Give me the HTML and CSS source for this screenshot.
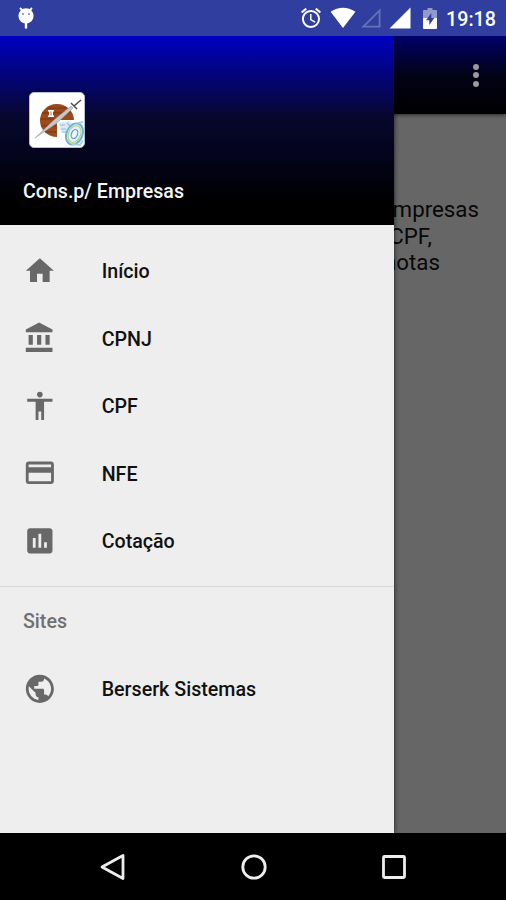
FILE: index.html
```html
<!DOCTYPE html>
<html lang="pt-BR">
<head>
<meta charset="utf-8">
<title>Cons.p/ Empresas</title>
<link rel="stylesheet" href="styles.css">
</head>
<body>
<div class="phone">
  <header class="status">
    <svg class="bug" width="18" height="24" viewBox="0 0 18 24"><path d="M3 2l3 3M15 2l-3 3" stroke="#fff" stroke-width="1.800"/><circle cx="9" cy="9.800" r="7.600" fill="#fff"/><path d="M9 16v5.500" stroke="#fff" stroke-width="2.400" stroke-linecap="round"/><circle cx="6" cy="8" r="1" fill="#7780bd"/><circle cx="12" cy="8" r="1" fill="#7780bd"/></svg>
    <svg class="alarm" width="24" height="24" viewBox="0 0 24 24" fill="#fff"><path d="M22 5.72l-4.6-3.86-1.29 1.53 4.6 3.86L22 5.72zM7.88 3.39L6.6 1.86 2 5.71l1.29 1.53 4.59-3.85zM12.5 8H11v6l4.75 2.85.75-1.23-4-2.37V8zM12 4c-4.97 0-9 4.03-9 9s4.02 9 9 9a9 9 0 0 0 0-18zm0 16c-3.87 0-7-3.13-7-7s3.13-7 7-7 7 3.13 7 7-3.13 7-7 7z"/></svg>
    <svg class="wifi" width="26" height="22" viewBox="0 0 26 22"><path d="M13 21L.6 4.8Q13-3.2 25.4 4.8z" fill="#fff"/></svg>
    <svg class="empty" width="20" height="20" viewBox="0 0 20 20"><path d="M18.6 2.4v16.2H2.4z" fill="none" stroke="#6672b8" stroke-width="1.8"/></svg>
    <svg class="signal" width="22" height="22" viewBox="0 0 22 22"><path d="M21.5.5v21H.5z" fill="#fff"/></svg>
    <svg class="battery" width="14" height="21" viewBox="0 0 14 21"><path d="M4.5 0h5v2H13a1 1 0 0 1 1 1v8H0V3a1 1 0 0 1 1-1h3.500z" fill="#929acc"/><path d="M0 10h14v10a1 1 0 0 1-1 1H1a1 1 0 0 1-1-1z" fill="#fff"/><path d="M8.300 5L3 12.300h3.300V17l5-7.100H8.300z" fill="#303f9f"/></svg>
    <span class="clock">19:18</span>
  </header>
  <main class="screen">
    <div class="toolbar"><i></i><i></i><i></i></div>
    <div class="content">
      <p class="line-a">empresas</p>
      <p class="line-b">CPF,</p>
      <p class="line-c">notas</p>
    </div>
    <aside class="drawer">
      <div class="account">
        <svg class="logo" width="56" height="56" viewBox="0 0 56 56">
          <rect x=".5" y=".5" width="55" height="55" rx="4.500" fill="#fff" stroke="#b9bdd0"/>
          <path d="M28 28V45A17 16.500 0 1 1 45 28z" fill="#9b4a1c"/>
          <path d="M13 21h28M11 27h20M12 34h15M16 40h12M18 16h20" stroke="#6d2c0d" stroke-width="1" opacity=".7"/>
          <path d="M19 18h6v1.500h-1v4h1V25h-6v-1.500h1v-4h-1z" fill="#fff"/>
          <path d="M22 19.500v4" stroke="#9b4a1c" stroke-width=".8"/>
          <path d="M6 46L25 28 42 14l2 2L28 31z" fill="#c5c9cc" stroke="#9a9fa3" stroke-width=".6"/>
          <path d="M42 11l6 6M45 14l7-6" stroke="#4b4b4d" stroke-width="1.500"/>
          <path d="M29 31l11-2 5 3-6 11-7-3z" fill="#d8ebf6"/>
          <path d="M31 33h5M32 37h5M38 31l3 3M33 40h4" stroke="#8fc0de" stroke-width="1.200"/>
          <ellipse cx="45.500" cy="42" rx="8" ry="11" transform="rotate(24 45.500 42)" fill="#e2f2f8" stroke="#6fb3cf" stroke-width="1.900"/>
          <ellipse cx="45.500" cy="42" rx="6" ry="8.700" transform="rotate(24 45.500 42)" fill="none" stroke="#b6c97b" stroke-width="1"/>
          <ellipse cx="45.500" cy="42" rx="3" ry="4.700" transform="rotate(24 45.500 42)" fill="#eff8fd" stroke="#5a9fce" stroke-width="1.200"/>
          <path d="M43 52l8 1 3-5M49 31l5-1" fill="none" stroke="#a4d0e8" stroke-width="1.800"/>
        </svg>
        <div class="name">Cons.p/ Empresas</div>
      </div>
      <nav class="menu">
        <a><svg viewBox="0 0 24 24"><path d="M10 20v-6h4v6h5v-8h3L12 3 2 12h3v8z"/></svg><span>Início</span></a>
        <a><svg viewBox="0 0 24 24"><path d="M4 10v7h3v-7H4zm6 0v7h3v-7h-3zM2 22h19v-3H2v3zm14-12v7h3v-7h-3zm-4.500-9L2 6v2h19V6l-9.500-5z"/></svg><span>CPNJ</span></a>
        <a><svg viewBox="0 0 24 24"><path d="M12 2a2 2 0 1 1 0 4 2 2 0 0 1 0-4zm9 7h-6v13h-2v-6h-2v6H9V9H3V7h18v2z"/></svg><span>CPF</span></a>
        <a><svg viewBox="0 0 24 24"><path d="M20 4H4c-1.110 0-1.990.89-1.990 2L2 18c0 1.110.89 2 2 2h16c1.110 0 2-.89 2-2V6c0-1.110-.89-2-2-2zm0 14H4v-6h16v6zm0-10H4V6h16v2z"/></svg><span>NFE</span></a>
        <a><svg viewBox="0 0 24 24"><path d="M19 3H5c-1.100 0-2 .9-2 2v14c0 1.100.9 2 2 2h14c1.100 0 2-.9 2-2V5c0-1.100-.9-2-2-2zM9 17H7v-7h2v7zm4 0h-2V7h2v10zm4 0h-2v-4h2v4z"/></svg><span>Cotação</span></a>
      </nav>
      <div class="menu sites">
        <h2>Sites</h2>
        <a><svg viewBox="0 0 24 24"><path d="M12 2C6.480 2 2 6.480 2 12s4.480 10 10 10 10-4.480 10-10S17.520 2 12 2zm-1 17.930c-3.950-.49-7-3.850-7-7.930 0-.62.080-1.210.210-1.790L9 15v1c0 1.100.9 2 2 2v1.930zm6.900-2.540c-.26-.81-1-1.390-1.900-1.390h-1v-3c0-.55-.45-1-1-1H8v-2h2c.55 0 1-.45 1-1V7h2c1.100 0 2-.9 2-2v-.41c2.930 1.190 5 4.060 5 7.410 0 2.080-.8 3.970-2.100 5.390z"/></svg><span>Berserk Sistemas</span></a>
      </div>
    </aside>
  </main>
  <footer class="navbar">
    <svg width="28" height="28" viewBox="0 0 28 28"><path d="M24 2.500v23L3 14z"/></svg>
    <svg width="28" height="28" viewBox="0 0 28 28"><circle cx="14" cy="14" r="11.200"/></svg>
    <svg width="28" height="28" viewBox="0 0 28 28"><rect x="3.500" y="3.500" width="21" height="21" rx="1"/></svg>
  </footer>
</div>
</body>
</html>
```
FILE: styles.css
```css
* { box-sizing: border-box; }
body { margin: 0; font-family: Roboto, "Liberation Sans", sans-serif; background: #000; }
p, h2 { margin: 0; }
.phone { width: 506px; height: 900px; display: flex; flex-direction: column; overflow: hidden; }
.status { height: 36px; flex: none; display: flex; align-items: center; background: #303f9f; color: #fff; padding: 0 10px 0 17px; }
.bug { margin-top: -1px; }
.alarm { margin-left: auto; margin-right: 7px; }
.wifi { margin-right: 5px; }
.empty { margin-right: 8px; }
.signal { margin-right: 12px; }
.battery { margin-right: 9px; }
.clock { font-size: 19.700px; font-weight: 500; line-height: 34px; padding-top: 3px; }
.screen { flex: 1; position: relative; background: #666; overflow: hidden; }
.toolbar { height: 78px; display: flex; flex-direction: column; align-items: flex-end; justify-content: center; gap: 2.500px; padding-right: 27px; background: linear-gradient(#00006a, #020216 50%, #000); box-shadow: 0 1px 4px rgba(0, 0, 0, .6); }
.toolbar i { width: 6px; height: 6px; border-radius: 50%; background: #999; }
.content { padding-top: 82px; font-size: 22.300px; line-height: 26.700px; color: #080808; text-align: right; }
.line-a { padding-right: 27px; }
.line-b { padding-right: 74px; }
.line-c { padding-right: 66px; }
.drawer { position: absolute; top: 0; left: 0; bottom: 0; width: 394px; background: #eee; box-shadow: 0 0 5px rgba(0, 0, 0, .75); }
.account { height: 189px; display: flex; flex-direction: column; justify-content: space-between; padding: 56px 23px 21.500px; background: linear-gradient(#0000c2, #07072e 43%, #03031a 65%, #000 88%); }
.logo { margin-left: 6px; }
.name { color: #f5f5f5; font-size: 19.600px; font-weight: 500; line-height: 24px; }
.menu { padding: 12px 0 11px; }
.menu a { height: 67.500px; display: flex; align-items: center; padding-left: 23px; gap: 45px; font-size: 19.650px; font-weight: 500; color: #111; }
.menu span { padding-top: 2px; }
.menu svg { width: 33.700px; height: 33.700px; flex: none; fill: #686868; }
.sites { border-top: 1px solid #d9d9d9; padding-top: 1px; }
.sites h2 { height: 67.500px; padding-left: 23px; font-size: 19.600px; font-weight: 500; line-height: 68.500px; color: #707070; }
.navbar { height: 67px; flex: none; background: #000; display: flex; justify-content: center; align-items: center; gap: 112.500px; padding-left: 1px; }
.navbar svg { fill: none; stroke: #eee; stroke-width: 2.800; stroke-linejoin: round; }
```
